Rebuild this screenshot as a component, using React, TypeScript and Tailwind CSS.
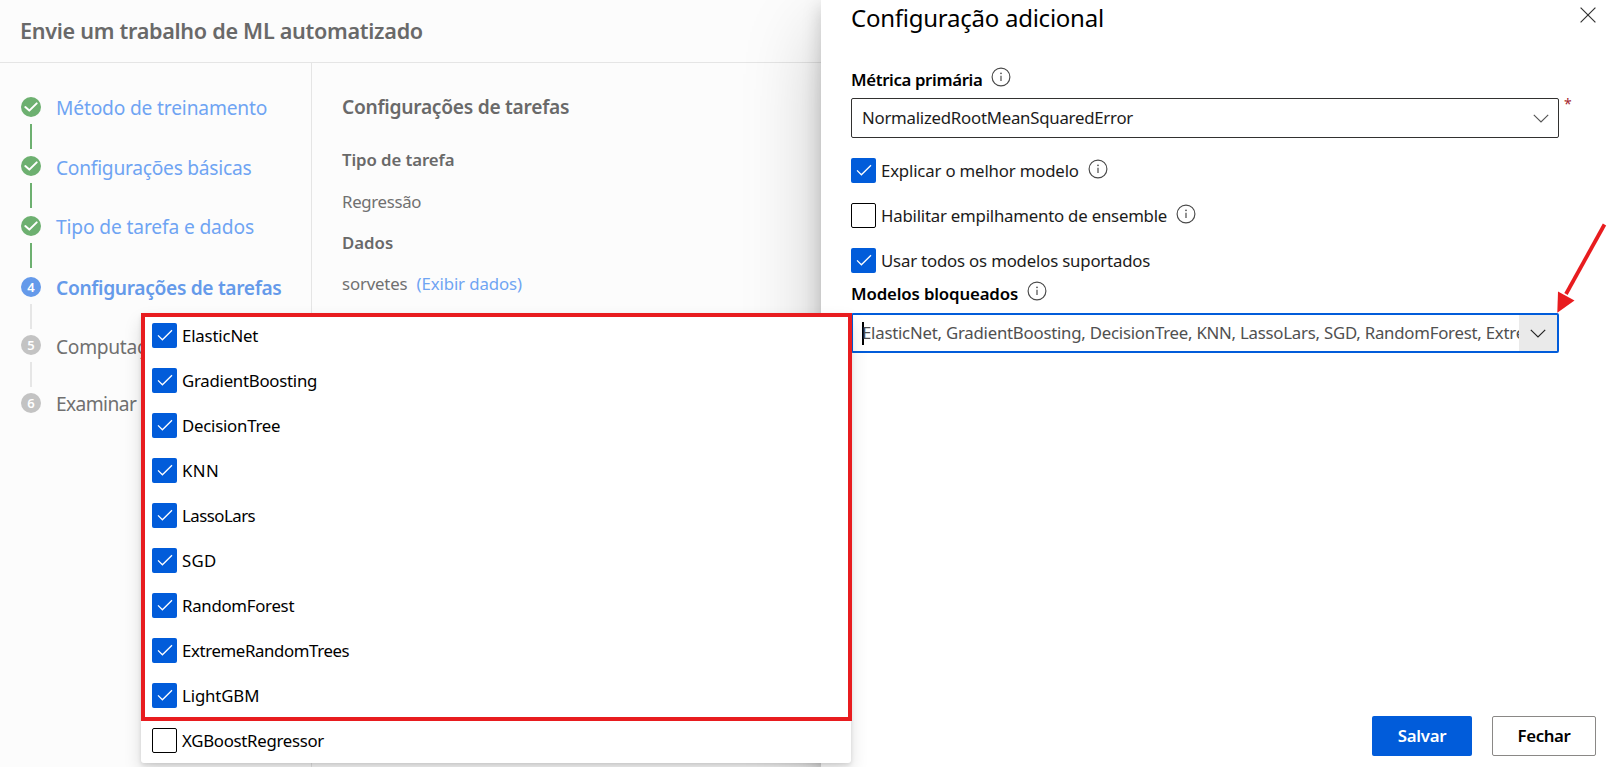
const CheckMark = () => (
  <svg className="size-[25px]" viewBox="0 0 25 25" fill="none">
    <path d="M6 12.4 L10.4 16.8 L20 7.2" stroke="#fff" strokeWidth="1.3" />
  </svg>
);

const Checkbox = ({ checked }: { checked: boolean }) =>
  checked ? (
    <span className="size-[25px] shrink-0 rounded-[2px] bg-[#015cda]">
      <CheckMark />
    </span>
  ) : (
    <span className="size-[25px] shrink-0 rounded-[2px] border border-black bg-white" />
  );

const Info = () => (
  <svg className="size-5 shrink-0" viewBox="0 0 20 20" fill="none">
    <circle cx="10" cy="10" r="8.9" stroke="#4a4a4a" strokeWidth="1.15" />
    <path d="M10 8.7 V14" stroke="#4a4a4a" strokeWidth="1.2" />
    <circle cx="10" cy="6.3" r="0.85" fill="#4a4a4a" />
  </svg>
);

const Chevron = ({ color }: { color: string }) => (
  <svg className="h-[9px] w-4 shrink-0" viewBox="0 0 16 9" fill="none">
    <path d="M0.8 0.8 L8 8 L15.2 0.8" stroke={color} strokeWidth="1.15" />
  </svg>
);

const DoneIcon = () => (
  <svg className="size-5" viewBox="0 0 20 20" fill="none">
    <circle cx="10" cy="10" r="10" fill="#6db070" />
    <path d="M4.3 10.1 L8.3 13.6 L15.7 6.4" stroke="#fff" strokeWidth="2" strokeLinecap="round" strokeLinejoin="round" />
  </svg>
);

type Step = { label: string; state: "done" | "current" | "todo"; row: string; text: string };

const steps: Step[] = [
  { label: "Método de treinamento", state: "done", row: "h-[59px]", text: "tracking-[-0.17px] text-[#6fa4f3]" },
  { label: "Configurações básicas", state: "done", row: "h-[60px]", text: "mt-px tracking-[-0.26px] text-[#6fa4f3]" },
  { label: "Tipo de tarefa e dados", state: "done", row: "h-[61px]", text: "tracking-[-0.14px] text-[#6fa4f3]" },
  { label: "Configurações de tarefas", state: "current", row: "h-[58px]", text: "tracking-[-0.34px] font-semibold text-[#659aea]" },
  { label: "Computação", state: "todo", row: "h-[58px]", text: "mt-px tracking-[-0.3px] text-[#707070]" },
  { label: "Examinar", state: "todo", row: "h-5", text: "tracking-[-0.6px] text-[#707070]" },
];

const Stepper = () => (
  <ol className="w-[312px] shrink-0 border-r border-[#e5e5e5] pt-[34px] pl-[21px]">
    {steps.map((s, i) => (
      <li key={s.label} className={`flex gap-[15px] ${s.row}`}>
        <div className="flex w-5 flex-col items-center">
          {s.state === "done" ? (
            <DoneIcon />
          ) : (
            <span
              className={`flex size-5 shrink-0 items-center justify-center rounded-full text-[13px] leading-5 font-semibold text-white ${
                s.state === "current" ? "bg-[#659aea]" : "bg-[#c3c3c3]"
              }`}
            >
              {i + 1}
            </span>
          )}
          {i < steps.length - 1 && (
            <span className={`mt-[7px] h-[25px] w-0.5 shrink-0 ${s.state === "done" ? "bg-[#6db070]" : "bg-[#e6e6e6]"}`} />
          )}
        </div>
        <span className={`h-5 text-[19.2px] leading-[21px] ${s.text}`}>{s.label}</span>
      </li>
    ))}
  </ol>
);

const models = [
  { name: "ElasticNet", on: true, track: "tracking-[-0.16px]" },
  { name: "GradientBoosting", on: true, track: "tracking-[-0.25px]" },
  { name: "DecisionTree", on: true, track: "tracking-[-0.23px]" },
  { name: "KNN", on: true, track: "tracking-[0.4px]" },
  { name: "LassoLars", on: true, track: "tracking-[-0.5px]" },
  { name: "SGD", on: true, track: "tracking-[0.3px]" },
  { name: "RandomForest", on: true, track: "tracking-[-0.27px]" },
  { name: "ExtremeRandomTrees", on: true, track: "tracking-[-0.37px]" },
  { name: "LightGBM", on: true, track: "tracking-[-0.12px]" },
  { name: "XGBoostRegressor", on: false, track: "tracking-[-0.28px]" },
];

const ModelMenu = () => (
  <div className="absolute top-[314px] left-[141px] h-[449px] w-[710px] rounded-[3px] bg-white shadow-[0_8px_18px_rgba(0,0,0,0.132),0_1.5px_4.5px_rgba(0,0,0,0.108)]">
    <ul className="flex flex-col gap-5 pt-[9px] pl-[11px]">
      {models.map((m) => (
        <li key={m.name} className="flex h-[25px] items-center gap-[5px]">
          <Checkbox checked={m.on} />
          <span className={`leading-[27px] text-black ${m.track}`}>{m.name}</span>
        </li>
      ))}
    </ul>
    <div className="absolute top-[-1px] left-0 h-[408px] w-[711px] border-4 border-[#e81c1f]" />
  </div>
);

const PointerArrow = () => (
  <svg className="absolute top-[220px] left-[1550px] h-24 w-16" viewBox="0 0 64 96" fill="none">
    <path d="M54.5 4.5 L16 74" stroke="#e81c1f" strokeWidth="3.8" />
    <path d="M8 71.5 L24.5 80.5 L7.3 92.7 Z" fill="#e81c1f" />
  </svg>
);

export default function App() {
  return (
    <div className="relative flex h-[767px] w-[1622px] overflow-hidden bg-[#fcfcfc] font-['Noto_Sans',sans-serif] text-[16.8px] whitespace-nowrap">
      <div className="flex w-[821px] shrink-0 flex-col">
        <header className="flex h-[63px] items-center border-b border-[#e5e5e5] pl-[20px]">
          <h1 className="text-[21.6px] leading-[30px] font-semibold tracking-[-0.29px] text-[#696969]">
            Envie um trabalho de ML automatizado
          </h1>
        </header>
        <div className="flex flex-1">
          <Stepper />
          <main className="flex flex-col pt-[34px] pl-[30px] leading-5 text-[#707070]">
            <h2 className="text-[19.2px] leading-5 font-semibold tracking-[-0.27px] text-[#696969]">Configurações de tarefas</h2>
            <h3 className="mt-[33px] font-semibold tracking-[-0.09px] text-[#696969]">Tipo de tarefa</h3>
            <p className="mt-[22px] tracking-[-0.3px]">Regressão</p>
            <h3 className="mt-[21px] font-semibold text-[#696969]">Dados</h3>
            <p className="mt-[21px] flex gap-[9px]">
              <span className="tracking-[-0.15px]">sorvetes</span>
              <a className="tracking-[-0.1px] text-[#6fa4f3]">(Exibir dados)</a>
            </p>
          </main>
        </div>
      </div>

      <aside className="flex flex-1 flex-col bg-white pr-[26px] pl-[30px] text-[#1b1b1b] shadow-[0_32px_72px_rgba(0,0,0,0.22),0_6px_18px_rgba(0,0,0,0.18)]">
        <div className="flex h-[36px] items-center justify-between">
          <h2 className="text-[24px] leading-[36px] tracking-[-0.25px] text-black">Configuração adicional</h2>
          <svg className="mb-[6px] size-4" viewBox="0 0 16 16" fill="none">
            <path d="M0.6 0.6 L15.4 15.4 M15.4 0.6 L0.6 15.4" stroke="#333" strokeWidth="1.2" />
          </svg>
        </div>

        <div className="mt-[31px] flex h-[22px] items-start gap-[9px]">
          <span className="leading-[25px] font-semibold tracking-[-0.36px] text-black">Métrica primária</span>
          <Info />
        </div>
        <div className="mt-[9px] flex gap-[5px]">
          <div className="flex h-10 w-[708px] items-center justify-between rounded-[2px] border border-[#323130] pr-[9px] pl-[10px]">
            <span className="tracking-[-0.24px]">NormalizedRootMeanSquaredError</span>
            <Chevron color="#555" />
          </div>
          <span className="-mt-1 text-[14px] leading-5 text-[#a4262c]">*</span>
        </div>

        <div className="mt-5 flex flex-col gap-5">
          <div className="flex h-[25px] items-center gap-[5px]">
            <Checkbox checked />
            <span className="leading-[27px] tracking-[-0.17px]">Explicar o melhor modelo</span>
            <span className="mb-[4px] ml-1"><Info /></span>
          </div>
          <div className="flex h-[25px] items-center gap-[5px]">
            <Checkbox checked={false} />
            <span className="leading-[27px] tracking-[-0.21px]">Habilitar empilhamento de ensemble</span>
            <span className="mb-[4px] ml-1"><Info /></span>
          </div>
          <div className="flex h-[25px] items-center gap-[5px]">
            <Checkbox checked />
            <span className="leading-[27px] tracking-[-0.18px]">Usar todos os modelos suportados</span>
          </div>
        </div>

        <div className="mt-[8px] flex h-[22px] items-start gap-[9px]">
          <span className="leading-[25px] font-semibold tracking-[-0.14px] text-black">Modelos bloqueados</span>
          <Info />
        </div>
        <div className="mt-[10px] flex h-10 w-[708px] rounded-[2px] border-2 border-[#015cda]">
          <div className="flex w-[666px] items-center overflow-hidden pl-[9px]">
            <span className="h-[23px] w-0.5 shrink-0 bg-black" />
            <span className="-ml-0.5 tracking-[-0.23px] text-[#505050]">
              ElasticNet, GradientBoosting, DecisionTree, KNN, LassoLars, SGD, RandomForest, ExtremeRandomTrees, LightGBM
            </span>
          </div>
          <div className="flex flex-1 items-center justify-center bg-[#eaeaea]">
            <Chevron color="#222" />
          </div>
        </div>

        <div className="mt-auto mb-[11px] flex justify-end gap-5 font-semibold">
          <button className="h-10 w-[100px] rounded-[2px] bg-[#015cda] tracking-[-0.3px] text-white">Salvar</button>
          <button className="h-10 w-[104px] rounded-[2px] border border-[#8a8886] bg-white tracking-[-0.35px] text-black">Fechar</button>
        </div>
      </aside>

      <ModelMenu />
      <PointerArrow />
    </div>
  );
}
